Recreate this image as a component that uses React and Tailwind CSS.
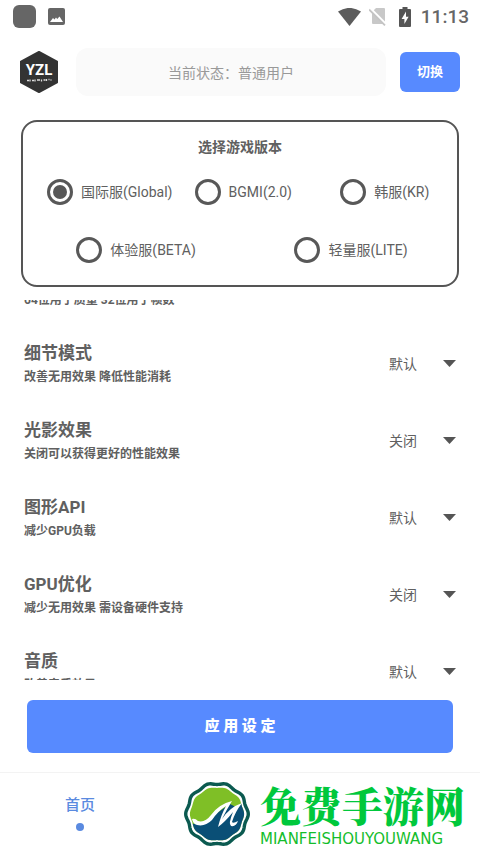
import { useLayoutEffect, useRef } from "react";

const versions = [
  { id: "global", label: "国际服(Global)" },
  { id: "bgmi", label: "BGMI(2.0)" },
  { id: "kr", label: "韩服(KR)" },
];

const extraVersions = [
  { id: "beta", label: "体验服(BETA)" },
  { id: "lite", label: "轻量服(LITE)" },
];

const settings = [
  { id: "bits", title: "位数模式", note: "64位用于质量 32位用于帧数", value: "默认" },
  { id: "detail", title: "细节模式", note: "改善无用效果 降低性能消耗", value: "默认" },
  { id: "shadow", title: "光影效果", note: "关闭可以获得更好的性能效果", value: "关闭" },
  { id: "api", title: "图形API", note: "减少GPU负载", value: "默认" },
  { id: "gpu", title: "GPU优化", note: "减少无用效果 需设备硬件支持", value: "关闭" },
  { id: "audio", title: "音质", note: "改善音质效果", value: "默认" },
];

// Ten-lobed badge outline centred in the 66-unit emblem box.
function badgePath(radius, wave) {
  const points = [];
  for (let i = 0; i < 120; i += 1) {
    const a = (i / 120) * Math.PI * 2;
    const r = radius + wave * Math.cos(10 * a);
    points.push(`${(33 + r * Math.cos(a)).toFixed(2)} ${(33 + r * Math.sin(a)).toFixed(2)}`);
  }
  return `M${points.join("L")}Z`;
}

function StatusBar() {
  return (
    <div className="flex h-[33px] shrink-0 items-center pl-[13px] pr-[11px] text-[#666]">
      <span className="size-[23px] rounded-md bg-[#666]" />
      <svg className="ml-3 size-[17px]" viewBox="0 0 17 17" aria-hidden="true">
        <rect width="17" height="17" rx="2" fill="#666" />
        <path d="M2 14 L5 10 L6.5 11.5 L8 9.5 L9.2 11 L11.5 8.5 L15 14 Z" fill="#fff" />
      </svg>
      <svg className="ml-auto h-[18px] w-[23px]" viewBox="0 0 23 18" aria-hidden="true">
        <path d="M11.5 18 L0 3.6 Q11.5 -3.8 23 3.6 Z" fill="#5c5c5c" />
      </svg>
      <svg className="ml-2 h-[19px] w-[18px]" viewBox="0 0 18 19" aria-hidden="true">
        <path d="M7 1 H15 Q16 1 16 2 V17 H4 Q3 17 3 16 V5 Z" fill="#c8c8c8" />
        <path d="M1 1 L17.5 17.6" stroke="#fff" strokeWidth="2.4" />
        <path d="M0 2.4 L16 18.4" stroke="#c4c4c4" strokeWidth="1.8" />
      </svg>
      <svg className="ml-3 h-5 w-3" viewBox="0 0 12 20" aria-hidden="true">
        <path d="M3.5 0 H8.5 V2 H11 Q12 2 12 3 V19 Q12 20 11 20 H1 Q0 20 0 19 V3 Q0 2 1 2 H3.5 Z" fill="#555" />
        <path d="M7 4.5 L2.6 12 H5.4 V17 L9.6 9.8 H7 Z" fill="#fff" />
      </svg>
      <span className="ml-[10px] text-[19px] font-medium leading-6">11:13</span>
    </div>
  );
}

function AppLogo() {
  return (
    <svg className="h-[42px] w-[38px] shrink-0" viewBox="0 0 38 42" role="img" aria-label="YZL">
      <path
        d="M19 1 L37 10.6 V31.4 L19 41 L1 31.4 V10.6 Z"
        fill="#333"
        stroke="#333"
        strokeWidth="2"
        strokeLinejoin="round"
      />
      <text x="19" y="24" textAnchor="middle" fill="#fff" fontSize="15" fontWeight="700" fontFamily="Roboto, sans-serif">
        YZL
      </text>
      <path
        d="M7 29.5 h2 M10 28.5 v2 M12 29.5 h2 M15 28.5 v2 M17 29 h3 M21.5 28.5 v2 M23.5 29 h2 M26.5 28 v2 M28.5 28.5 h1 M30.5 29 h1"
        stroke="#ddd"
        strokeWidth="1.3"
      />
    </svg>
  );
}

function VersionOption({ id, label, checked }) {
  return (
    <label className="flex items-center gap-2 whitespace-nowrap text-[14px] leading-6">
      <input
        type="radio"
        name="version"
        value={id}
        defaultChecked={checked}
        className="size-[26px] shrink-0 appearance-none rounded-full border-3 border-[#585858] bg-white bg-clip-content p-[3px] checked:bg-[#585858]"
      />
      <span>{label}</span>
    </label>
  );
}

function SettingRow({ id, title, note, value }) {
  return (
    <li className="flex h-[77px] items-center justify-between">
      <label htmlFor={id} className="font-bold">
        <span className="block text-[17px] leading-[26px]">{title}</span>
        <span className="block text-xs leading-[22px]">{note}</span>
      </label>
      <div className="relative flex items-center">
        <select
          id={id}
          defaultValue={value}
          className="w-[67px] appearance-none bg-transparent text-[14px] leading-6"
        >
          <option>默认</option>
          <option>关闭</option>
        </select>
        <svg className="pointer-events-none absolute right-0 h-[7px] w-[13px]" viewBox="0 0 13 7" aria-hidden="true">
          <path d="M0 0 H13 L6.5 7 Z" fill="#555" />
        </svg>
      </div>
    </li>
  );
}

function Emblem() {
  return (
    <svg className="size-[66px] shrink-0" viewBox="0 0 66 66" aria-hidden="true">
      <defs>
        <clipPath id="badge-inner">
          <path d={badgePath(26.6, 0.5)} />
        </clipPath>
      </defs>
      <path d={badgePath(30.4, 0.9)} fill="#fff" stroke="#0b5a50" strokeWidth="3.4" />
      <g clipPath="url(#badge-inner)">
        <rect width="66" height="66" fill="#7fbf26" />
        <path d="M4 42 Q20 46 30 34 L46 23 L52 26 L66 16 V66 H4 Z" fill="#0a4f76" />
      </g>
      <path
        d="M8 38 Q11 37 14 40 Q21 42 27 34 Q35 23 48 20 Q43 28 38 38 Q46 26 58 22 Q51 31 48 41 Q49 43 54 40 Q52 46 47 45 Q44 43 49 31 Q41 41 34 46 Q37 34 42 25 Q34 30 28 39 Q21 46 13 44 Q9 43 8 38 Z"
        fill="#fff"
      />
    </svg>
  );
}

export default function App() {
  const listRef = useRef(null);

  useLayoutEffect(() => {
    listRef.current.scrollTop = 52;
  }, []);

  return (
    <div className="flex h-screen flex-col bg-white font-[Roboto,'Noto_Sans_CJK_SC',sans-serif] text-[#606060]">
      <StatusBar />

      <header className="flex items-center px-5 pt-[15px]">
        <AppLogo />
        <input
          type="text"
          readOnly
          aria-label="当前状态"
          value="当前状态：普通用户"
          className="ml-[18px] h-12 min-w-0 flex-1 rounded-xl bg-[#fafafa] text-center text-[14px] text-[#999]"
        />
        <button type="button" className="ml-[14px] h-10 w-[60px] rounded-md bg-[#578aff] text-[13px] font-bold text-white">
          切换
        </button>
      </header>

      <fieldset className="mx-[21px] mt-6 flex h-[167px] shrink-0 flex-col rounded-2xl border-2 border-[#555] pt-[13px]">
        <h2 className="text-center text-[14px] font-bold leading-6">选择游戏版本</h2>
        <div className="mt-5 grid grid-cols-[148fr_146fr_93fr] px-6">
          {versions.map((v) => (
            <VersionOption key={v.id} {...v} checked={v.id === "global"} />
          ))}
        </div>
        <div className="mt-8 flex justify-around pl-1">
          {extraVersions.map((v) => (
            <VersionOption key={v.id} {...v} />
          ))}
        </div>
      </fieldset>

      <ul ref={listRef} className="mt-[13px] min-h-0 flex-1 overflow-y-auto px-6 [scrollbar-width:none]">
        {settings.map((s) => (
          <SettingRow key={s.id} {...s} />
        ))}
      </ul>

      <div className="px-[27px] pb-[19px] pt-5">
        <button type="button" className="h-[53px] w-full rounded-md bg-[#578aff] text-[15px] font-black text-white">
          应 用 设 定
        </button>
      </div>

      <footer className="grid h-[81px] shrink-0 grid-cols-3 border-t border-[#f3f3f3]">
        <a href="#home" className="flex flex-col items-center pt-5 text-[15px] font-medium leading-6 text-[#5a8ae0]">
          首页
          <span className="mt-[6px] size-2 rounded-full bg-[#5a8ae0]" />
        </a>
        <div className="col-span-2 flex items-center gap-[10px] pl-6 pt-px">
          <Emblem />
          <div className="whitespace-nowrap">
            <p className="font-['Noto_Serif_CJK_SC','Noto_Sans_CJK_SC',serif] text-[41px] font-black leading-[50px] text-[#00c83c]">
              免费手游网
            </p>
            <p className="font-['DejaVu_Sans',sans-serif] text-[15px] leading-[18px] text-[#14bd2c]">MIANFEISHOUYOUWANG</p>
          </div>
        </div>
      </footer>
    </div>
  );
}
